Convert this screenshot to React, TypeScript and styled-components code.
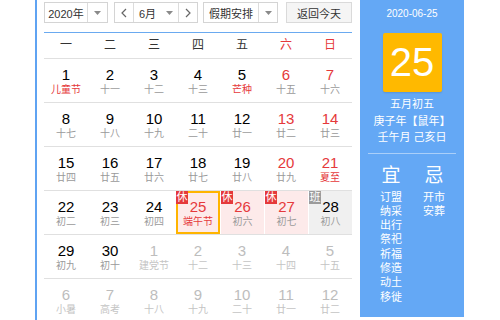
import styled, { createGlobalStyle } from "styled-components";

const RED = "#e5393b";
const BLUE = "#64a8f5";

const GlobalStyle = createGlobalStyle`
  body {
    margin: 0;
    background: #fff;
    font-family: "Liberation Sans", Arial, "Noto Sans CJK SC", sans-serif;
  }
`;

const Widget = styled.div`
  display: flex;
  align-items: flex-start;
  width: 500px;
  height: 320px;
  overflow: hidden;
  padding-left: 35px;
  box-sizing: border-box;
`;

const Main = styled.div`
  width: 325px;
  height: 320px;
  box-sizing: border-box;
  border-left: 2px solid #5fa3f2;
  padding: 0 8px 0 7px;
`;

const Toolbar = styled.div`
  display: flex;
  align-items: flex-start;
  height: 33px;
  box-sizing: border-box;
  padding-top: 2px;
  border-bottom: 1px solid #6aaaf0;
`;

const Box = styled.div<{ $w: number; $ml?: number }>`
  display: flex;
  width: ${(p) => p.$w}px;
  height: 21px;
  margin-left: ${(p) => p.$ml ?? 0}px;
  box-sizing: border-box;
  border: 1px solid #d4d4d4;
  background: #fff;
  font-size: 11px;
  color: #333;
`;

const BoxText = styled.div`
  flex: 1;
  display: flex;
  align-items: center;
  justify-content: center;
  gap: 10px;
`;

const BoxPart = styled.div<{ $w: number; $side: "left" | "right" }>`
  width: ${(p) => p.$w}px;
  display: flex;
  align-items: center;
  justify-content: center;
  border-${(p) => p.$side}: 1px solid #dcdcdc;
`;

const TodayButton = styled.div`
  width: 66px;
  height: 21px;
  margin-left: 8px;
  box-sizing: border-box;
  border: 1px solid #dadada;
  background: #f5f5f5;
  font-size: 11px;
  color: #333;
  display: flex;
  align-items: center;
  justify-content: center;
`;

const WeekHead = styled.div`
  display: grid;
  grid-template-columns: repeat(7, 44px);
  height: 26px;
  box-sizing: border-box;
  border-bottom: 1px solid #e0e0e0;
  align-items: center;
`;

const HeadCell = styled.div<{ $red?: boolean }>`
  text-align: center;
  font-size: 12px;
  line-height: 25px;
  color: ${(p) => (p.$red ? RED : "#333")};
`;

const WeekRow = styled.div`
  display: grid;
  grid-template-columns: repeat(7, 44px);
  height: 44px;
  box-sizing: border-box;
  border-bottom: 1px solid #e0e0e0;
`;

type Kind = "normal" | "today" | "rest" | "work";

const Cell = styled.div<{ $kind: Kind }>`
  position: relative;
  height: 43px;
  box-sizing: border-box;
  text-align: center;
  padding-top: ${(p) => (p.$kind === "today" ? 5 : 7)}px;
  background: ${(p) =>
    p.$kind === "work" ? "#f0f0f0" : p.$kind === "normal" ? "transparent" : "#fdeaea"};
  background-clip: padding-box;
  border: ${(p) => (p.$kind === "today" ? "2px solid #ffb400" : "none")};
  border-left: ${(p) =>
    p.$kind === "rest" || p.$kind === "work" ? "1px solid #fff" : undefined};
`;

const DayNum = styled.div<{ $color: string }>`
  font-size: 15px;
  line-height: 18px;
  color: ${(p) => p.$color};
`;

const Lunar = styled.div<{ $color: string }>`
  font-size: 10px;
  line-height: 12px;
  color: ${(p) => p.$color};
`;

const Badge = styled.span<{ $work?: boolean; $offset: number }>`
  position: absolute;
  top: ${(p) => p.$offset}px;
  left: ${(p) => p.$offset}px;
  width: 12px;
  height: 13px;
  font-size: 11px;
  line-height: 13px;
  text-align: center;
  color: #fff;
  background: ${(p) => (p.$work ? "#9b9b9b" : RED)};
`;

const Side = styled.div`
  width: 104px;
  height: 317px;
  background: ${BLUE};
  color: #fff;
  display: flex;
  flex-direction: column;
  align-items: center;
`;

const SideDate = styled.div`
  margin-top: 8px;
  font-size: 10px;
  line-height: 12px;
`;

const BigDay = styled.div`
  margin-top: 13px;
  width: 59px;
  height: 59px;
  border-radius: 2px;
  background: #ffb900;
  font-size: 40px;
  line-height: 59px;
  text-align: center;
  box-shadow: 0 1px 2px rgba(0, 0, 0, 0.12);
`;

const LunarInfo = styled.div`
  margin-top: 4px;
  font-size: 11px;
  line-height: 16.5px;
  text-align: center;
`;

const Divider = styled.div`
  align-self: stretch;
  margin: 7px 8px 0;
  height: 1px;
  background: rgba(255, 255, 255, 0.45);
`;

const Advice = styled.div`
  align-self: stretch;
  display: grid;
  grid-template-columns: 38px 38px;
  column-gap: 5px;
  padding-left: 12px;
  margin-top: 11px;
`;

const AdviceCol = styled.div`
  text-align: center;
`;

const AdviceTitle = styled.div`
  font-size: 19px;
  line-height: 22px;
  margin-bottom: 3px;
`;

const AdviceItem = styled.div`
  font-size: 11px;
  line-height: 14.3px;
`;

const Caret = () => (
  <svg width="7" height="4" viewBox="0 0 7 4">
    <path d="M0 0h7L3.5 4z" fill="#8a8a8a" />
  </svg>
);

const Chevron = ({ dir }: { dir: "l" | "r" }) => (
  <svg width="6" height="10" viewBox="0 0 6 10">
    <path
      d={dir === "l" ? "M5 1L1 5l4 4" : "M1 1l4 4-4 4"}
      fill="none"
      stroke="#666"
      strokeWidth="1.2"
    />
  </svg>
);

type Day = {
  n: number;
  l: string;
  other?: boolean;
  fest?: boolean;
  kind?: Kind;
  red?: boolean;
};

const weeks: Day[][] = [
  [
    { n: 1, l: "儿童节", fest: true },
    { n: 2, l: "十一" },
    { n: 3, l: "十二" },
    { n: 4, l: "十三" },
    { n: 5, l: "芒种", fest: true },
    { n: 6, l: "十五", red: true },
    { n: 7, l: "十六", red: true },
  ],
  [
    { n: 8, l: "十七" },
    { n: 9, l: "十八" },
    { n: 10, l: "十九" },
    { n: 11, l: "二十" },
    { n: 12, l: "廿一" },
    { n: 13, l: "廿二", red: true },
    { n: 14, l: "廿三", red: true },
  ],
  [
    { n: 15, l: "廿四" },
    { n: 16, l: "廿五" },
    { n: 17, l: "廿六" },
    { n: 18, l: "廿七" },
    { n: 19, l: "廿八" },
    { n: 20, l: "廿九", red: true },
    { n: 21, l: "夏至", red: true, fest: true },
  ],
  [
    { n: 22, l: "初二" },
    { n: 23, l: "初三" },
    { n: 24, l: "初四" },
    { n: 25, l: "端午节", red: true, fest: true, kind: "today" },
    { n: 26, l: "初六", red: true, kind: "rest" },
    { n: 27, l: "初七", red: true, kind: "rest" },
    { n: 28, l: "初八", kind: "work" },
  ],
  [
    { n: 29, l: "初九" },
    { n: 30, l: "初十" },
    { n: 1, l: "建党节", other: true },
    { n: 2, l: "十二", other: true },
    { n: 3, l: "十三", other: true },
    { n: 4, l: "十四", other: true },
    { n: 5, l: "十五", other: true },
  ],
  [
    { n: 6, l: "小暑", other: true },
    { n: 7, l: "高考", other: true },
    { n: 8, l: "十八", other: true },
    { n: 9, l: "十九", other: true },
    { n: 10, l: "二十", other: true },
    { n: 11, l: "廿一", other: true },
    { n: 12, l: "廿二", other: true },
  ],
];

const heads = ["一", "二", "三", "四", "五", "六", "日"];
const good = ["订盟", "纳采", "出行", "祭祀", "祈福", "修造", "动土", "移徙"];
const bad = ["开市", "安葬"];

function DayCell({ d }: { d: Day }) {
  const kind = d.kind ?? "normal";
  const numColor = d.other ? "#bdbdbd" : d.red ? RED : "#000";
  const lunarColor = d.other ? "#c4c4c4" : d.fest ? RED : "#9a9a9a";
  return (
    <Cell $kind={kind}>
      {(kind === "today" || kind === "rest") && (
        <Badge $offset={kind === "today" ? -2 : 0}>休</Badge>
      )}
      {kind === "work" && (
        <Badge $work $offset={0}>
          班
        </Badge>
      )}
      <DayNum $color={numColor}>{d.n}</DayNum>
      <Lunar $color={lunarColor}>{d.l}</Lunar>
    </Cell>
  );
}

export default function App() {
  return (
    <>
      <GlobalStyle />
      <Widget>
        <Main>
          <Toolbar>
            <Box $w={64}>
              <BoxText>2020年</BoxText>
              <BoxPart $w={19} $side="left">
                <Caret />
              </BoxPart>
            </Box>
            <Box $w={84} $ml={6}>
              <BoxPart $w={18} $side="right">
                <Chevron dir="l" />
              </BoxPart>
              <BoxText>
                <span>6月</span>
                <Caret />
              </BoxText>
              <BoxPart $w={18} $side="left">
                <Chevron dir="r" />
              </BoxPart>
            </Box>
            <Box $w={75} $ml={5}>
              <BoxText>假期安排</BoxText>
              <BoxPart $w={18} $side="left">
                <Caret />
              </BoxPart>
            </Box>
            <TodayButton>返回今天</TodayButton>
          </Toolbar>
          <WeekHead>
            {heads.map((h, i) => (
              <HeadCell key={h} $red={i > 4}>
                {h}
              </HeadCell>
            ))}
          </WeekHead>
          {weeks.map((w, i) => (
            <WeekRow key={i}>
              {w.map((d, j) => (
                <DayCell key={j} d={d} />
              ))}
            </WeekRow>
          ))}
        </Main>
        <Side>
          <SideDate>2020-06-25</SideDate>
          <BigDay>25</BigDay>
          <LunarInfo>
            五月初五
            <br />
            庚子年【鼠年】
            <br />
            壬午月 己亥日
          </LunarInfo>
          <Divider />
          <Advice>
            <AdviceCol>
              <AdviceTitle>宜</AdviceTitle>
              {good.map((g) => (
                <AdviceItem key={g}>{g}</AdviceItem>
              ))}
            </AdviceCol>
            <AdviceCol>
              <AdviceTitle>忌</AdviceTitle>
              {bad.map((b) => (
                <AdviceItem key={b}>{b}</AdviceItem>
              ))}
            </AdviceCol>
          </Advice>
        </Side>
      </Widget>
    </>
  );
}
